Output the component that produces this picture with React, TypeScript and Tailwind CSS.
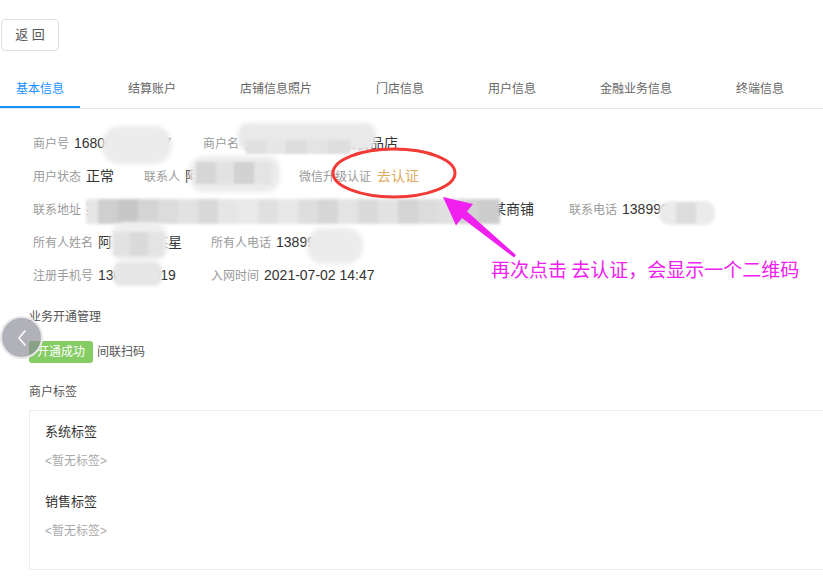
import React from "react";

function Label({ children }: { children: React.ReactNode }) {
  return <span className="text-[12px] text-[#9a9a9a] whitespace-nowrap">{children}</span>;
}

function Value({ children, className = "" }: { children: React.ReactNode; className?: string }) {
  return <span className={"ml-[5px] text-[14px] text-[#333] whitespace-nowrap " + className}>{children}</span>;
}

const tabs = ["基本信息", "结算账户", "店铺信息照片", "门店信息", "用户信息", "金融业务信息", "终端信息"];

export default function App() {
  return (
    <div className="relative w-[823px] h-[583px] overflow-hidden bg-white font-['Liberation_Sans','Noto_Sans_CJK_SC',sans-serif] text-[#333]">
      {/* back button */}
      <div className="pt-[19px] pl-[1px]">
        <button className="h-[32px] w-[58px] border border-[#dcdfe6] rounded-[4px] text-[13px] text-[#555] bg-white flex items-center justify-center">
          返 回
        </button>
      </div>

      {/* tabs */}
      <div className="mt-[21px] flex gap-[32px] border-b border-[#e4e7ed]">
        {tabs.map((t, i) => (
          <div
            key={t}
            className={
              i === 0
                ? "h-[36px] px-[16px] flex items-center text-[12px] text-[#1890ff] border-b-2 border-[#1890ff]"
                : "h-[36px] px-[16px] flex items-center text-[12px] text-[#666] border-b-2 border-transparent"
            }
          >
            {t}
          </div>
        ))}
      </div>

      {/* info rows */}
      <div className="mt-[18px] pl-[33px]">
        <div className="h-[33px] flex items-center gap-[30px]">
          <div className="flex items-center">
            <Label>商户号</Label>
            <Value className="w-[99px] overflow-hidden">16800000000 7</Value>
          </div>
          <div className="flex items-center">
            <Label>商户名</Label>
            <Value>某某某某某某某某食品店</Value>
          </div>
        </div>
        <div className="h-[33px] flex items-center gap-[30px]">
          <div className="flex items-center">
            <Label>用户状态</Label>
            <Value>正常</Value>
          </div>
          <div className="flex items-center">
            <Label>联系人</Label>
            <Value className="w-[84px]">阿某某</Value>
          </div>
          <div className="flex items-center">
            <Label>微信升级认证</Label>
            <span className="ml-[6px] text-[14px] text-[#dfaa62]">去认证</span>
          </div>
        </div>
        <div className="h-[33px] flex items-center gap-[30px]">
          <div className="flex items-center">
            <Label>联系地址</Label>
            <Value className="w-[453px]">某某省某某市某某区某某街道某某路某某号某某大厦某某层某某某某商铺</Value>
          </div>
          <div className="flex items-center">
            <Label>联系电话</Label>
            <Value>1389900</Value>
          </div>
        </div>
        <div className="h-[33px] flex items-center gap-[30px]">
          <div className="flex items-center">
            <Label>所有人姓名</Label>
            <Value className="w-[83px]">阿某某某某星</Value>
          </div>
          <div className="flex items-center">
            <Label>所有人电话</Label>
            <Value>1389900</Value>
          </div>
        </div>
        <div className="h-[33px] flex items-center gap-[30px]">
          <div className="flex items-center">
            <Label>注册手机号</Label>
            <Value className="w-[83px]">1300000019</Value>
          </div>
          <div className="flex items-center">
            <Label>入网时间</Label>
            <Value>2021-07-02 14:47</Value>
          </div>
        </div>
      </div>

      {/* business section */}
      <div className="pl-[29px]">
        <div className="mt-[17px] text-[12px] leading-[17px] text-[#555]">业务开通管理</div>
        <div className="mt-[15px] flex items-center">
          <span className="h-[22px] w-[64px] rounded-[3px] bg-[#84cc63] text-white text-[12px] flex items-center justify-center">
            开通成功
          </span>
          <span className="ml-[4px] text-[12px] text-[#555]">间联扫码</span>
        </div>
        <div className="mt-[21px] text-[12px] leading-[17px] text-[#555]">商户标签</div>
        <div className="mt-[9px] w-[810px] h-[160px] border border-[#ebeef5] px-[15px] pt-[12px]">
          <div className="text-[13px] leading-[18px] text-[#333]">系统标签</div>
          <div className="mt-[12px] text-[12px] leading-[17px] text-[#aaa]">&lt;暂无标签&gt;</div>
          <div className="mt-[23px] text-[13px] leading-[18px] text-[#333]">销售标签</div>
          <div className="mt-[12px] text-[12px] leading-[17px] text-[#aaa]">&lt;暂无标签&gt;</div>
        </div>
      </div>

      {/* privacy mosaic overlays */}
      <div className="absolute left-[102px] top-[126px] w-[70px] h-[38px] rounded-[18px] bg-[#ececec] blur-[2px]" />
      <div className="absolute left-[238px] top-[123px] w-[138px] h-[28px] rounded-[10px] bg-[#e9e9e9] blur-[2px]" />
      <div className="absolute left-[246px] top-[140px] w-[104px] h-[14px] flex blur-[1px]">
        <div className="w-[20px] bg-[#e0e0e0]" />
        <div className="w-[20px] bg-[#e6e6e6]" />
        <div className="w-[20px] bg-[#dcdcdc]" />
        <div className="w-[22px] bg-[#e4e4e4]" />
        <div className="w-[22px] bg-[#dedede]" />
      </div>
      <div className="absolute left-[190px] top-[156px] w-[90px] h-[36px] rounded-[14px] bg-[#ececec] blur-[2px]" />
      <div className="absolute left-[196px] top-[162px] w-[76px] h-[22px] flex blur-[1px]">
        <div className="w-[20px] bg-[#d6d6d6]" />
        <div className="w-[18px] bg-[#e2e2e2]" />
        <div className="w-[20px] bg-[#d2d2d2]" />
        <div className="w-[18px] bg-[#e4e4e4]" />
      </div>
      <div className="absolute left-[86px] top-[199px] w-[424px] h-[25px] flex blur-[1.5px]">
        <div className="w-[12px] bg-[#e6e6e6]" />
        <div className="w-[20px] bg-[#cfcfcf]" />
        <div className="w-[20px] bg-[#c6c6c6]" />
        <div className="w-[20px] bg-[#d4d4d4]" />
        <div className="w-[20px] bg-[#dcdcdc]" />
        <div className="w-[20px] bg-[#e2e2e2]" />
        <div className="w-[20px] bg-[#d8d8d8]" />
        <div className="w-[20px] bg-[#e6e6e6]" />
        <div className="w-[20px] bg-[#eaeaea]" />
        <div className="w-[20px] bg-[#e0e0e0]" />
        <div className="w-[20px] bg-[#e8e8e8]" />
        <div className="w-[20px] bg-[#dedede]" />
        <div className="w-[20px] bg-[#d6d6d6]" />
        <div className="w-[20px] bg-[#e4e4e4]" />
        <div className="w-[20px] bg-[#dadada]" />
        <div className="w-[20px] bg-[#e2e2e2]" />
        <div className="w-[20px] bg-[#d4d4d4]" />
        <div className="w-[20px] bg-[#dcdcdc]" />
        <div className="w-[20px] bg-[#e0e0e0]" />
        <div className="w-[20px] bg-[#d2d2d2]" />
        <div className="w-[22px] bg-[#cdcdcd]" />
      </div>
      <div className="absolute left-[110px] top-[222px] w-[58px] h-[40px] rounded-[16px] bg-[#eeeeee] blur-[2px]" />
      <div className="absolute left-[114px] top-[232px] w-[50px] h-[24px] flex blur-[1px]">
        <div className="w-[16px] bg-[#e2e2e2]" />
        <div className="w-[18px] bg-[#dadada]" />
        <div className="w-[16px] bg-[#e4e4e4]" />
      </div>
      <div className="absolute left-[659px] top-[201px] w-[56px] h-[24px] rounded-[10px] bg-[#ebebeb] blur-[1.5px]" />
      <div className="absolute left-[676px] top-[203px] w-[20px] h-[20px] bg-[#dcdcdc] blur-[1px]" />
      <div className="absolute left-[307px] top-[228px] w-[56px] h-[36px] rounded-[16px] bg-[#ececec] blur-[2px]" />
      <div className="absolute left-[113px] top-[262px] w-[49px] h-[24px] rounded-[8px] bg-[#e6e6e6] blur-[1.5px]" />

      {/* collapse circle */}
      <div className="absolute left-[0px] top-[316px] w-[43px] h-[43px] rounded-full bg-[rgba(140,140,152,0.68)] border-2 border-[#e8e8ea] flex items-center justify-center">
        <svg width="12" height="20" viewBox="0 0 12 20" fill="none">
          <path d="M9 3 L3 10 L9 17" stroke="white" strokeWidth="1.6" strokeLinecap="round" strokeLinejoin="round" />
        </svg>
      </div>

      {/* annotation */}
      <svg className="absolute left-0 top-0 pointer-events-none" width="823" height="583">
        <ellipse cx="394" cy="173" rx="61" ry="24" fill="none" stroke="#f23a36" strokeWidth="3" />
        <polygon
          points="443,197 473,204 467,211.5 516,255 514,257.5 462,218 456,225.5"
          fill="#f020f0"
        />
      </svg>
      <div className="absolute left-[491px] top-[256px] text-[19px] leading-[26px] text-[#f020f0] whitespace-nowrap font-['Noto_Sans_CJK_SC',sans-serif]">
        再次点击 去认证，会显示一个二维码
      </div>
    </div>
  );
}
